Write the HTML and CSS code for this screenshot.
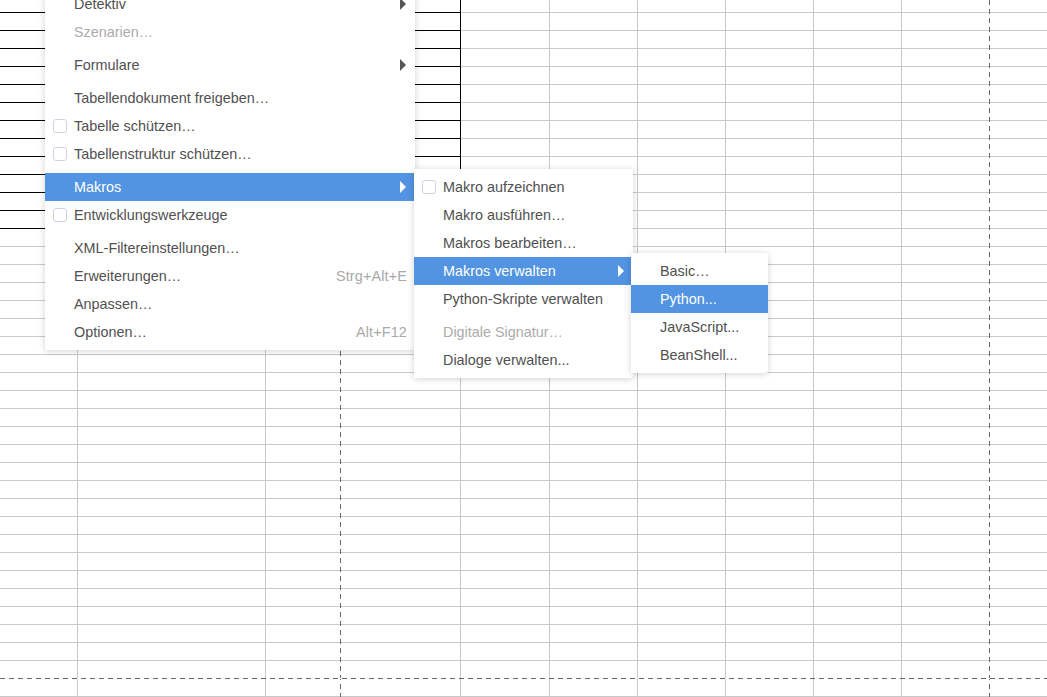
FILE: index.html
```html
<!DOCTYPE html>
<html lang="de">
<head>
    <meta charset="UTF-8">
    <meta name="viewport" content="width=device-width, initial-scale=1.0">
    <title>Extras</title>
    <link rel="stylesheet" href="styles.css">
</head>
<body>
    <div class="sheet">
        <div class="grid" id="grid"></div>

        <!-- page breaks -->
        <div class="page-break vertical break-c"></div>
        <div class="page-break vertical break-j"></div>
        <div class="page-break horizontal break-row"></div>

        <ul class="menu menu-tools">
            <li class="item has-sub"><span class="gutter"></span><span class="label">Detektiv</span><span class="arrow"></span></li>
            <li class="item disabled"><span class="gutter"></span><span class="label">Szenarien…</span></li>
            <li class="separator"></li>
            <li class="item has-sub"><span class="gutter"></span><span class="label">Formulare</span><span class="arrow"></span></li>
            <li class="separator"></li>
            <li class="item"><span class="gutter"></span><span class="label">Tabellendokument freigeben…</span></li>
            <li class="item"><span class="gutter"><span class="check"></span></span><span class="label">Tabelle schützen…</span></li>
            <li class="item"><span class="gutter"><span class="check"></span></span><span class="label">Tabellenstruktur schützen…</span></li>
            <li class="separator"></li>
            <li class="item has-sub active"><span class="gutter"></span><span class="label">Makros</span><span class="arrow"></span></li>
            <li class="item"><span class="gutter"><span class="check"></span></span><span class="label">Entwicklungswerkzeuge</span></li>
            <li class="separator"></li>
            <li class="item"><span class="gutter"></span><span class="label">XML-Filtereinstellungen…</span></li>
            <li class="item"><span class="gutter"></span><span class="label">Erweiterungen…</span><span class="shortcut">Strg+Alt+E</span></li>
            <li class="item"><span class="gutter"></span><span class="label">Anpassen…</span></li>
            <li class="item"><span class="gutter"></span><span class="label">Optionen…</span><span class="shortcut">Alt+F12</span></li>
        </ul>

        <ul class="menu menu-macros">
            <li class="item"><span class="gutter"><span class="check"></span></span><span class="label">Makro aufzeichnen</span></li>
            <li class="item"><span class="gutter"></span><span class="label">Makro ausführen…</span></li>
            <li class="item"><span class="gutter"></span><span class="label">Makros bearbeiten…</span></li>
            <li class="item has-sub active"><span class="gutter"></span><span class="label">Makros verwalten</span><span class="arrow"></span></li>
            <li class="item"><span class="gutter"></span><span class="label">Python-Skripte verwalten</span></li>
            <li class="separator"></li>
            <li class="item disabled"><span class="gutter"></span><span class="label">Digitale Signatur…</span></li>
            <li class="item"><span class="gutter"></span><span class="label">Dialoge verwalten...</span></li>
        </ul>

        <ul class="menu menu-organize">
            <li class="item"><span class="gutter"></span><span class="label">Basic…</span></li>
            <li class="item active"><span class="gutter"></span><span class="label">Python...</span></li>
            <li class="item"><span class="gutter"></span><span class="label">JavaScript...</span></li>
            <li class="item"><span class="gutter"></span><span class="label">BeanShell...</span></li>
        </ul>
    </div>

    <script>
        // column widths include the 1px right border of each cell
        const colCount = 11;
        const rowCount = 40;
        const grid = document.getElementById('grid');

        for (let r = 0; r < rowCount; r++) {
            for (let c = 0; c < colCount; c++) {
                const cell = document.createElement('div');
                cell.className = 'cell';
                // bordered block in the top-left corner (A1:D13)
                if (r <= 12 && c <= 3) {
                    cell.classList.add('framed-bottom');
                }
                if (r <= 12 && c === 3) {
                    cell.classList.add('framed-right');
                }
                grid.appendChild(cell);
            }
        }
    </script>
</body>
</html>
```

FILE: styles.css
```css
html, body {
    margin: 0;
    padding: 0;
    background: #fff;
}
body {
    font-family: "Liberation Sans", Arial, sans-serif;
    overflow: hidden;
}

.sheet {
    position: relative;
    width: 1047px;
    height: 697px;
    overflow: hidden;
}

/* cell grid */
.grid {
    display: grid;
    grid-template-columns: 78px 188px 75px 120px 89px repeat(6, 88px);
    grid-auto-rows: 18px;
    margin-top: -5px;
}
.cell {
    box-sizing: border-box;
    border-right: 1px solid #c8c8c8;
    border-bottom: 1px solid #c8c8c8;
}
.cell.framed-bottom {
    border-bottom-color: #000;
}
.cell.framed-right {
    border-right-color: #000;
}

/* page break lines drawn over the grid */
.page-break {
    position: absolute;
}
.page-break.vertical {
    top: 0;
    bottom: 0;
    width: 1px;
    background: repeating-linear-gradient(to bottom, #666 0 5px, #fff 5px 9px);
}
.page-break.horizontal {
    left: 0;
    right: 0;
    height: 1px;
    background: repeating-linear-gradient(to right, #666 0 5px, #fff 5px 9px);
}
.break-c { left: 340px; }
.break-j { left: 989px; }
.break-row { top: 678px; }

/* menus */
.menu {
    position: absolute;
    list-style: none;
    margin: 0;
    padding: 4px 0;
    background: #fff;
    border-radius: 2px;
    box-shadow: 0 1px 7px rgba(0, 0, 0, 0.18);
    font-size: 14.4px;
    color: #505050;
}
.menu-tools {
    left: 45px;
    top: -14px;
    width: 370px;
}
.menu-macros {
    left: 414px;
    top: 169px;
    width: 219px;
}
.menu-organize {
    left: 631px;
    top: 253px;
    width: 137px;
}

.menu .item {
    display: flex;
    align-items: center;
    height: 28px;
    line-height: 28px;
    padding-right: 8px;
    white-space: nowrap;
}
.menu .separator {
    height: 5px;
}
.menu .gutter {
    flex: 0 0 29px;
    display: flex;
    align-items: center;
}
.menu .label {
    flex: 1;
}
.menu .shortcut {
    color: #a8a8a8;
    letter-spacing: 0.15px;
}
.menu .check {
    box-sizing: border-box;
    width: 14px;
    height: 14px;
    margin-left: 8px;
    border: 1px solid #cdd2df;
    border-radius: 3px;
    background: #fff;
}
.menu .arrow {
    width: 0;
    height: 0;
    margin-right: 1px;
    border-top: 6px solid transparent;
    border-bottom: 6px solid transparent;
    border-left: 6px solid #555;
}

.menu .item.disabled {
    color: #ababab;
}
.menu .item.active {
    background: #5294e2;
    color: #fff;
}
.menu .item.active .arrow {
    border-left-color: #fff;
}
```
